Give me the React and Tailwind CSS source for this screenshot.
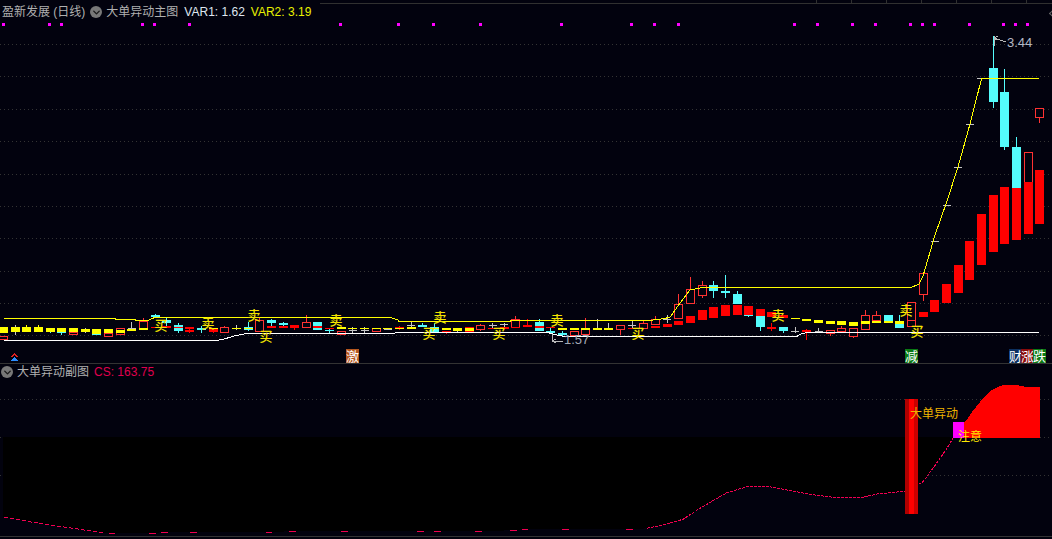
import React from "react";
import { ChevronDown } from "lucide-react";

const BG = "#02020e";
const GRAY = "#c4c4c4";
const RED = "#ff3232";
const CYAN = "#54fcfc";
const YEL = "#ffff00";

const slot = (i) => 3.7 + 11.64 * i;

// [index, kind, top, bottom, wickTop, wickBottom], y values as read off the chart
// kinds: y = yellow bar, r = red bar, c = cyan candle, h = hollow candle, g = gray doji
const low = [
  [0, "h", 336, 339], [0, "y", 327, 333],
  [1, "g", 331, 331, 325, 335], [1, "y", 327, 332],
  [2, "y", 327, 332, 325], [3, "y", 327, 332, 325],
  [4, "c", 330, 332, 330, 333], [4, "y", 328, 332],
  [5, "c", 328, 333, 328, 335], [5, "y", 328, 332],
  [6, "h", 332, 334], [6, "y", 328, 332],
  [7, "g", 331, 331, 328, 333], [7, "y", 329, 332],
  [8, "c", 333, 335], [8, "y", 329, 334],
  [9, "h", 333, 336], [9, "y", 329, 333],
  [10, "h", 328, 334, 328, 335], [10, "y", 330, 333],
  [11, "g", 328, 328, 322, 328], [11, "y", 329, 331],
  [12, "h", 321, 329, 318], [12, "y", 328, 330],
  [13, "c", 315, 317, 314, 318], [13, "r", 327, 328],
  [14, "c", 320, 323, 318, 327], [14, "r", 326, 328],
  [15, "c", 325, 331, 323, 333], [15, "r", 327, 328],
  [16, "r", 327, 329, 327, 333], [16, "r", 330, 332],
  [17, "c", 328, 330, 326, 333],
  [18, "r", 329, 332, 329, 333], [18, "y", 328, 329],
  [19, "h", 327, 332, 326],
  [20, "g", 328, 328, 325, 330], [20, "y", 328, 329],
  [21, "c", 327, 330, 322, 331], [21, "y", 328, 329],
  [22, "h", 320, 331, 317],
  [23, "c", 320, 323, 319, 327], [23, "r", 326, 328],
  [24, "c", 323, 325, 322, 326], [24, "r", 326, 328],
  [25, "r", 325, 328, 325, 330],
  [26, "h", 322, 327, 315],
  [27, "c", 322, 330], [27, "r", 326, 328],
  [28, "c", 330, 330, 328, 333], [28, "r", 328, 328],
  [29, "h", 331, 334, 331, 335], [29, "y", 327, 329],
  [30, "g", 330, 330, 327, 333], [30, "y", 328, 329],
  [31, "g", 330, 330, 327, 333], [31, "y", 328, 329],
  [32, "h", 328, 331, 328, 332], [32, "y", 328, 329],
  [33, "g", 329, 329, 328, 330], [33, "y", 328, 329],
  [34, "r", 327, 329, 326, 330], [34, "y", 328, 329],
  [35, "g", 325, 325, 321, 327], [35, "y", 327, 329],
  [36, "c", 325, 327, 323, 327],
  [37, "c", 327, 332, 323, 332], [37, "y", 328, 329],
  [38, "r", 331, 333, 331, 334], [38, "y", 328, 330],
  [39, "g", 330, 330, 328, 332], [39, "y", 328, 331],
  [40, "r", 327, 332, 327, 332], [40, "y", 328, 331],
  [41, "h", 325, 329, 324, 331],
  [42, "g", 325, 325, 323, 328], [42, "r", 328, 329],
  [43, "g", 324, 324, 323, 327], [43, "r", 327, 329],
  [44, "h", 319, 327, 316], [44, "r", 327, 328],
  [45, "r", 325, 327, 319, 327],
  [46, "c", 322, 331, 319], [46, "r", 326, 328],
  [47, "c", 331, 333, 328, 334], [47, "r", 327, 328],
  [48, "c", 333, 335, 331, 336], [48, "y", 328, 330],
  [49, "h", 331, 335], [49, "y", 328, 330],
  [50, "h", 329, 334, 318], [50, "y", 328, 330],
  [51, "g", 329, 329, 319, 329], [51, "y", 328, 330],
  [52, "g", 329, 329, 323, 329], [52, "y", 328, 330],
  [53, "h", 325, 329, 325, 335],
  [54, "g", 325, 325, 321, 328], [54, "r", 328, 329],
  [55, "h", 323, 328, 321],
  [56, "h", 319, 324, 316], [56, "r", 326, 328],
  [57, "g", 319, 319, 315, 323], [57, "r", 324, 327],
];

const high = [
  [58, "h", 304, 318, 294], [58, "r", 321, 325],
  [59, "h", 289, 303, 277], [59, "r", 316, 323],
  [60, "h", 285, 295, 281, 298], [60, "r", 310, 320],
  [61, "c", 285, 291, 281, 298], [61, "r", 307, 318],
  [62, "c", 291, 293, 275, 298], [62, "r", 305, 316],
  [63, "c", 294, 304, 291], [63, "r", 305, 315],
  [64, "c", 315, 315, 315, 317], [64, "r", 306, 315],
  [65, "c", 316, 327, 316, 331], [65, "r", 309, 316],
  [66, "r", 327, 329, 323, 331], [66, "r", 312, 317],
  [67, "c", 327, 331, 327, 333], [67, "r", 315, 318],
  [68, "g", 331, 331, 327, 333], [68, "y", 318, 319],
  [69, "r", 330, 332, 329, 340], [69, "y", 319, 321],
  [70, "g", 331, 331, 328, 332], [70, "y", 320, 323],
  [71, "h", 330, 333, 330, 336], [71, "y", 321, 324],
  [72, "h", 328, 331, 326], [72, "y", 321, 325],
  [73, "h", 328, 336, 328, 338], [73, "y", 322, 326],
  [74, "h", 315, 329, 310], [74, "y", 321, 324],
  [75, "h", 315, 320, 311], [75, "y", 321, 323],
  [76, "c", 315, 321], [76, "y", 321, 323],
  [77, "c", 321, 328, 315], [77, "y", 321, 324],
  [78, "h", 302, 326], [78, "h", 320, 326],
  [79, "h", 273, 294, 273, 301], [79, "r", 312, 317],
  [80, "g", 241, 241], [80, "r", 300, 312],
  [81, "g", 205, 205], [81, "r", 284, 303],
  [82, "g", 167, 167], [82, "r", 265, 293],
  [83, "g", 124, 124], [83, "r", 241, 280],
  [84, "g", 78, 78], [84, "r", 214, 265],
  [85, "c", 68, 102, 36, 108], [85, "r", 195, 252],
  [86, "c", 92, 147, 69, 150], [86, "r", 187, 244],
  [87, "c", 147, 188, 137], [87, "r", 188, 240],
  [88, "h", 152, 182], [88, "r", 182, 234],
  [89, "h", 108, 117, 108, 123], [89, "r", 170, 224],
];

const candles = [...low, ...high];

const yellowLine = "4,318 115,318 116,319.5 135,319.5 136,320.5 148,320.5 155,317.3 390,317.3 398,320 398,321 510,321 510,320.3 650,320.3 660,319.3 670,317.3 680,303 690,290 700,288 870,287.5 911,287.5 919,284 923,276 935,235 947,201 958,167 970,124 981.7,78 1039,78";
const whiteLine = "4,340.3 218,340.3 226,338.5 234,336 246,333.7 547,332.3 553,334 563,336.3 797,336.3 801,334 807,332.5 1039,332.3";

const signals = [
  ["买", 161, 325], ["卖", 208, 323], ["卖", 254, 315], ["买", 266, 336.5], ["卖", 336, 320.5],
  ["买", 429, 333], ["卖", 440, 317.5], ["买", 499, 333], ["卖", 557, 320.5], ["买", 638, 333],
  ["卖", 778, 315.5], ["卖", 906, 310], ["买", 917, 331],
];

const dots = [3.7, 49.3, 61.3, 142.7, 154.3, 189.3, 340.3, 398.3, 433.3, 480.3, 561.3, 631.3, 654.3, 678.3, 794.3, 817.3, 852.3, 875.3, 910.3, 922.3, 934.3, 969.3, 1003.3, 1015.3, 1027.3];
const grid = [44, 76.5, 109, 141.5, 174, 206, 238.5, 271, 303, 335.5];
const flags = [
  ["激", 346, "bg-[#b4561e]"], ["减", 905, "bg-[#0a7a14]"], ["财", 1009, "bg-[#0c3060]"], ["涨", 1021, "bg-[#8a0a0a]"], ["跌", 1033, "bg-[#0a7a14]"],
];

const leftCurve = [[4, 517.3], [33, 522.3], [66, 527.3], [100, 532.3], [105, 533.3]];
const midCurve = [[647, 528.3], [667, 524], [683, 519.3], [700, 508.3], [727, 492.7], [747, 486.7], [767, 486.3], [787, 490], [810, 494.3], [833, 497.3], [863, 497.3], [877, 494], [900, 491.7], [905, 491], [918, 484.7], [923, 481.7], [933, 468.3], [947, 448.3], [953, 438.3]];
const flats = [[109, 115, 533.3], [149, 156, 533.3], [161, 168, 532.3], [190, 197, 532.3], [266, 272, 532.3], [289, 296, 531.3], [341, 348, 531.3], [417, 424, 531.3], [434, 441, 531.3], [475, 482, 531.3], [510, 517, 530.3], [522, 528, 529.3], [562, 569, 529.3], [626, 633, 529.3]];
const toPts = (a) => a.map((p) => p.join(",")).join(" ");
const blackArea = toPts([[3, 437], [953, 437], ...[...midCurve].reverse(), [633, 529.3], [522, 529.3], [510, 530.3], [482, 531.3], [289, 531.3], [266, 532.3], [161, 532.3], [149, 533.3], ...[...leftCurve].reverse(), [3, 517]]);
const redArea = "964,438 964,422 968,418 972,412 976,407 980,402 984,397 988,393 992,390 996,388 1000,386 1004,385 1016,385 1022,386 1026,387 1040,387 1040,438";

function Toggle() {
  return (
    <span className="flex h-3 w-3 items-center justify-center rounded-full bg-[#787878]">
      <ChevronDown size={11} strokeWidth={3} className="text-[#1a1a1a]" />
    </span>
  );
}

function Candle({ c }) {
  const [i, kind, top, bot, wt, wb] = c;
  const x = slot(i);
  const colour = { y: YEL, r: "#ff0000", c: CYAN, h: RED, g: GRAY }[kind];
  const hasWick = wt !== undefined;
  return (
    <g>
      {hasWick && <line x1={x} x2={x} y1={wt} y2={wb === undefined ? top : wb} stroke={colour} />}
      {kind === "g" && <line x1={x - 4} x2={x + 4} y1={top} y2={top} stroke={GRAY} />}
      {kind === "h" && <rect x={x - 4} y={top} width={8} height={bot - top} fill={BG} stroke={RED} />}
      {kind !== "g" && kind !== "h" && <rect x={x - 4.5} y={top} width={9} height={Math.max(bot - top, 1)} fill={colour} />}
    </g>
  );
}

export default function App() {
  const order = { h: 0, g: 0, c: 1, y: 2, r: 2 };
  const sorted = [...candles].sort((a, b) => order[a[1]] - order[b[1]]);
  return (
    <div className="h-[539px] w-[1052px] overflow-hidden bg-[#02020e] font-['Liberation_Sans','Noto_Sans_CJK_SC',sans-serif] text-xs text-[#b0b0b0]">
      <div className="relative h-[22px]">
        <div className="flex items-center pl-[2px] pt-1 leading-4">
          <span>盈新发展 (日线)</span>
          <span className="ml-[5px]"><Toggle /></span>
          <span className="ml-1">大单异动主图</span>
          <span className="ml-[6px] text-[#dfe6f0]">VAR1: 1.62</span>
          <span className="ml-[6px] text-[#e8f000]">VAR2: 3.19</span>
        </div>
        <div className="absolute right-0 top-[3px] h-px w-[732px] bg-[#303030]" />
        {[816, 851, 886, 921, 956, 991, 1026].map((x) => (
          <div key={x} className="absolute top-0 h-[3px] w-px bg-[#303030]" style={{ left: x }} />
        ))}
        <div className="absolute right-[-3px] top-[11px] h-[5px] w-[5px] rotate-45 border-b border-l border-[#666]" />
      </div>

      <div className="relative h-[342px] border-b border-[#333]">
        <svg viewBox="0 22 1052 341" className="block h-[341px] w-[1052px]" shapeRendering="crispEdges">
          {dots.map((x) => <rect key={x} x={x - 1.5} y={23} width={3} height={3} fill="#ff00ff" />)}
          {grid.map((y) => <line key={y} x1={0} x2={1052} y1={y} y2={y} stroke="#333333" strokeDasharray="1 3" />)}
          {sorted.map((c, n) => <Candle key={n} c={c} />)}
          <polyline points={whiteLine} fill="none" stroke="#ffffff" />
          <polyline points={yellowLine} fill="none" stroke="#ffff00" />
          <path d="M994 46V36M994 38L1006 42M994 38L998 36M994 40L998 39" fill="none" stroke="#b8b8b8" />
          <path d="M552 334V341H563M552 341L556 339M552 341L556 343" fill="none" stroke="#b8b8b8" />
          <path d="M14 353L18 357H16L14 355L12 357H10Z" fill="#e02020" />
          <path d="M14 357L18 361H10Z" fill="#2a8cff" />
          <g shapeRendering="auto">
            {signals.map(([t, x, y], n) => (
              <text key={n} x={x} y={y + 4.5} textAnchor="middle" fontSize="13" fontWeight="500" fill="#f4e400">{t}</text>
            ))}
            <text x={1007} y={47} fontSize="13" fill="#b4b8c4">3.44</text>
            <text x={564} y={344} fontSize="13" fill="#a4a8b4">1.57</text>
          </g>
        </svg>
        {flags.map(([t, x, bg]) => (
          <span key={t} className={`absolute top-[327px] flex h-[14px] w-[13px] items-center justify-center text-[13px] leading-none text-white ${bg}`} style={{ left: x }}>
            {t}
          </span>
        ))}
      </div>

      <div className="flex h-4 items-center pl-[1px] leading-4">
        <Toggle />
        <span className="ml-1">大单异动副图</span>
        <span className="ml-[5px] text-[#e0004f]">CS: 163.75</span>
      </div>

      <div className="h-[157px] border-b border-[#333]">
        <svg viewBox="0 380 1052 156" className="block h-[156px] w-[1052px]" shapeRendering="crispEdges">
          {[399, 437, 475].map((y) => <line key={y} x1={0} x2={1052} y1={y} y2={y} stroke="#333333" strokeDasharray="1 3" />)}
          <polygon points={blackArea} fill="#000000" />
          <polygon points={redArea} fill="#ff0000" />
          <rect x={953} y={422} width={11} height={16} fill="#ff00ff" />
          <polyline points={toPts(leftCurve)} fill="none" stroke="#f00050" strokeDasharray="4 2" />
          {flats.map(([a, b, y]) => <line key={a} x1={a} x2={b} y1={y} y2={y} stroke="#f00050" />)}
          <polyline points={toPts(midCurve)} fill="none" stroke="#f00050" strokeDasharray="3 1" />
          <rect x={905} y={399} width={4} height={115} fill="#b00000" />
          <rect x={909} y={399} width={5} height={115} fill="#ff0000" />
          <rect x={914} y={399} width={4} height={115} fill="#cc0000" />
          <g shapeRendering="auto">
            <text x={910} y={418} fontSize="12" fill="#f0b400">大单异动</text>
            <text x={958} y={441} fontSize="12" fill="#ffe800">注意</text>
          </g>
        </svg>
      </div>
    </div>
  );
}
